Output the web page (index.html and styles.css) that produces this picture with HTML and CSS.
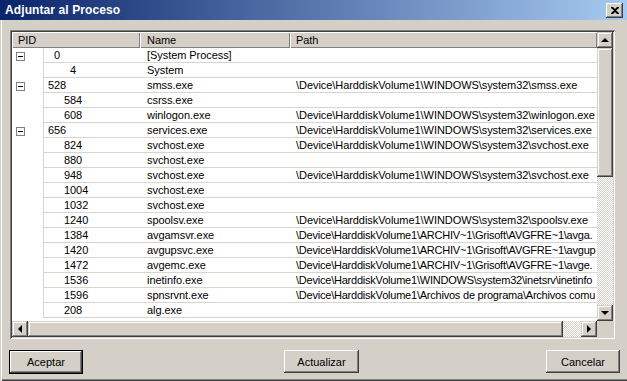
FILE: index.html
```html
<!DOCTYPE html>
<html lang="es">
<head>
<meta charset="utf-8">
<title>Adjuntar al Proceso</title>
<link rel="stylesheet" href="styles.css">
</head>
<body>
<div class="window">
  <div class="titlebar">
    <span class="title">Adjuntar al Proceso</span>
    <span class="close"><svg width="8" height="7" viewBox="0 0 8 7"><path d="M0 0h2l2 2 2-2h2v1L5 3.5 8 6v1H6L4 5 2 7H0V6l3-2.5L0 1z" fill="#000"/></svg></span>
  </div>
  <div class="client">
    <div class="listview">
      <div class="view">
        <div class="header">
          <div class="hcell">PID</div>
          <div class="hcell name-h">Name</div>
          <div class="hcell">Path</div>
        </div>
        <div class="row"><div class="gutter"><span class="box"></span></div><div class="pid ind-0">0</div><div class="name">[System Process]</div><div class="path"></div></div>
        <div class="row"><div class="gutter"></div><div class="pid ind-4">4</div><div class="name">System</div><div class="path"></div></div>
        <div class="row"><div class="gutter"><span class="box"></span></div><div class="pid lvl0">528</div><div class="name">smss.exe</div><div class="path">\Device\HarddiskVolume1\WINDOWS\system32\smss.exe</div></div>
        <div class="row"><div class="gutter"></div><div class="pid lvl1">584</div><div class="name">csrss.exe</div><div class="path"></div></div>
        <div class="row"><div class="gutter"></div><div class="pid lvl1">608</div><div class="name">winlogon.exe</div><div class="path">\Device\HarddiskVolume1\WINDOWS\system32\winlogon.exe</div></div>
        <div class="row"><div class="gutter"><span class="box"></span></div><div class="pid lvl0">656</div><div class="name">services.exe</div><div class="path">\Device\HarddiskVolume1\WINDOWS\system32\services.exe</div></div>
        <div class="row"><div class="gutter"></div><div class="pid lvl1">824</div><div class="name">svchost.exe</div><div class="path">\Device\HarddiskVolume1\WINDOWS\system32\svchost.exe</div></div>
        <div class="row"><div class="gutter"></div><div class="pid lvl1">880</div><div class="name">svchost.exe</div><div class="path"></div></div>
        <div class="row"><div class="gutter"></div><div class="pid lvl1">948</div><div class="name">svchost.exe</div><div class="path">\Device\HarddiskVolume1\WINDOWS\system32\svchost.exe</div></div>
        <div class="row"><div class="gutter"></div><div class="pid lvl1">1004</div><div class="name">svchost.exe</div><div class="path"></div></div>
        <div class="row"><div class="gutter"></div><div class="pid lvl1">1032</div><div class="name">svchost.exe</div><div class="path"></div></div>
        <div class="row"><div class="gutter"></div><div class="pid lvl1">1240</div><div class="name">spoolsv.exe</div><div class="path">\Device\HarddiskVolume1\WINDOWS\system32\spoolsv.exe</div></div>
        <div class="row"><div class="gutter"></div><div class="pid lvl1">1384</div><div class="name">avgamsvr.exe</div><div class="path long">\Device\HarddiskVolume1\ARCHIV~1\Grisoft\AVGFRE~1\avga.</div></div>
        <div class="row"><div class="gutter"></div><div class="pid lvl1">1420</div><div class="name">avgupsvc.exe</div><div class="path long">\Device\HarddiskVolume1\ARCHIV~1\Grisoft\AVGFRE~1\avgup</div></div>
        <div class="row"><div class="gutter"></div><div class="pid lvl1">1472</div><div class="name">avgemc.exe</div><div class="path long">\Device\HarddiskVolume1\ARCHIV~1\Grisoft\AVGFRE~1\avge.</div></div>
        <div class="row"><div class="gutter"></div><div class="pid lvl1">1536</div><div class="name">inetinfo.exe</div><div class="path long">\Device\HarddiskVolume1\WINDOWS\system32\inetsrv\inetinfo</div></div>
        <div class="row"><div class="gutter"></div><div class="pid lvl1">1596</div><div class="name">spnsrvnt.exe</div><div class="path long">\Device\HarddiskVolume1\Archivos de programa\Archivos comu</div></div>
        <div class="row"><div class="gutter"></div><div class="pid lvl1">208</div><div class="name">alg.exe</div><div class="path"></div></div>
      </div>
      <div class="vscroll">
        <div class="sbtn"><span class="arr up"></span></div>
        <div class="vthumb"></div>
        <div class="track"></div>
        <div class="sbtn"><span class="arr down"></span></div>
      </div>
      <div class="hscroll">
        <div class="sbtn"><span class="arr left"></span></div>
        <div class="hthumb"></div>
        <div class="track"></div>
        <div class="sbtn"><span class="arr right"></span></div>
      </div>
      <div class="corner"></div>
    </div>
    <div class="footer">
      <button class="btn default">Aceptar</button>
      <button class="btn mid">Actualizar</button>
      <button class="btn last">Cancelar</button>
    </div>
  </div>
</div>
</body>
</html>
```
FILE: styles.css
```css
* { box-sizing: border-box; }
html, body { margin: 0; padding: 0; }
body {
  width: 627px;
  height: 381px;
  overflow: hidden;
  background: #d4d0c8;
  font: 11px "Liberation Sans", Arial, sans-serif;
  color: #000;
}
.window {
  height: 381px;
  display: flex;
  flex-direction: column;
  box-shadow: inset 1px 0 #d4d0c8, inset 2px 0 #ffffff, inset 0 -1px #404040, inset 0 -2px #808080;
}
.titlebar {
  height: 20px;
  flex: none;
  background: linear-gradient(to right, #0a246a, #a6caf0);
  display: flex;
  align-items: center;
  justify-content: space-between;
  padding: 0 4px 0 5px;
}
.title { color: #fff; font-weight: bold; font-size: 12px; letter-spacing: 0.1px; }
.close {
  width: 17px;
  height: 15px;
  background: #d4d0c8;
  box-shadow: inset -1px -1px #404040, inset 1px 1px #ffffff, inset -2px -2px #808080;
  display: flex;
  align-items: center;
  justify-content: center;
}
.client { padding: 10px 0 0 10px; }
.listview {
  width: 605px;
  height: 309px;
  padding: 2px;
  background: #fff;
  box-shadow: inset 1px 1px #808080, inset -1px -1px #ffffff, inset 2px 2px #404040, inset -2px -2px #d4d0c8;
  display: grid;
  grid-template-columns: 585px 16px;
  grid-template-rows: 289px 16px;
}
.view { overflow: hidden; background: #fff; letter-spacing: -0.06px; }
.header {
  display: grid;
  grid-template-columns: 128px 150px 1fr;
  height: 16px;
}
.hcell {
  background: #d4d0c8;
  box-shadow: inset 1px 1px #ffffff, inset -1px -1px #808080;
  padding-left: 6px;
  line-height: 16px;
  white-space: nowrap;
}
.hcell.name-h { padding-left: 7px; }
.row {
  display: grid;
  grid-template-columns: 31px 97px 150px 307px;
  height: 15px;
  white-space: nowrap;
}
.row > div:not(.gutter) {
  border-bottom: 1px solid #d8d5cf;
  overflow: hidden;
  padding-top: 1px;
  line-height: 13px;
}
.gutter { padding: 4px 0 0 4px; }
.box {
  display: block;
  width: 9px;
  height: 9px;
  border: 1px solid #808080;
  background: linear-gradient(#000, #000) center / 5px 1px no-repeat, #fff;
}
.row > .pid { border-left: 1px solid #d8d5cf; }
.row > .lvl0 { padding-left: 4px; }
.row > .lvl1 { padding-left: 20px; }
.row > .ind-0 { padding-left: 10px; }
.row > .ind-4 { padding-left: 26px; }
.row > .name { padding-left: 7px; }
.row > .path { padding-left: 6px; }
.row > .path.long { letter-spacing: -0.22px; }
.vscroll { display: flex; flex-direction: column; }
.hscroll { display: flex; }
.sbtn {
  width: 16px;
  height: 16px;
  flex: none;
  background: #d4d0c8;
  box-shadow: inset -1px -1px #404040, inset 1px 1px #d4d0c8, inset -2px -2px #808080, inset 2px 2px #ffffff;
  display: flex;
  align-items: center;
  justify-content: center;
}
.vthumb, .hthumb {
  flex: none;
  background: #d4d0c8;
  box-shadow: inset -1px -1px #404040, inset 1px 1px #d4d0c8, inset -2px -2px #808080, inset 2px 2px #ffffff;
}
.vthumb { height: 129px; }
.hthumb { width: 535px; }
.track {
  flex: 1;
  background: repeating-conic-gradient(#d4d0c8 0 25%, #ffffff 0 50%) 0 0 / 2px 2px;
}
.corner { background: #d4d0c8; }
.arr { width: 0; height: 0; border: 4px solid transparent; }
.arr.up { border-top: 0; border-bottom-color: #000; }
.arr.down { border-bottom: 0; border-top-color: #000; }
.arr.left { border-left: 0; border-right-color: #000; }
.arr.right { border-right: 0; border-left-color: #000; }
.footer { display: flex; margin-top: 11px; }
.btn {
  font: 11px "Liberation Sans", Arial, sans-serif;
  color: #000;
  width: 75px;
  height: 23px;
  padding: 0;
  border: 0;
  background: #d4d0c8;
  box-shadow: inset -1px -1px #404040, inset 1px 1px #ffffff, inset -2px -2px #808080;
}
.btn.default {
  margin-left: -1px;
  width: 74px;
  height: 24px;
  border: 1px solid #000;
}
.btn.mid { margin-left: 201px; }
.btn.last { margin-left: 187px; width: 74px; }
```
